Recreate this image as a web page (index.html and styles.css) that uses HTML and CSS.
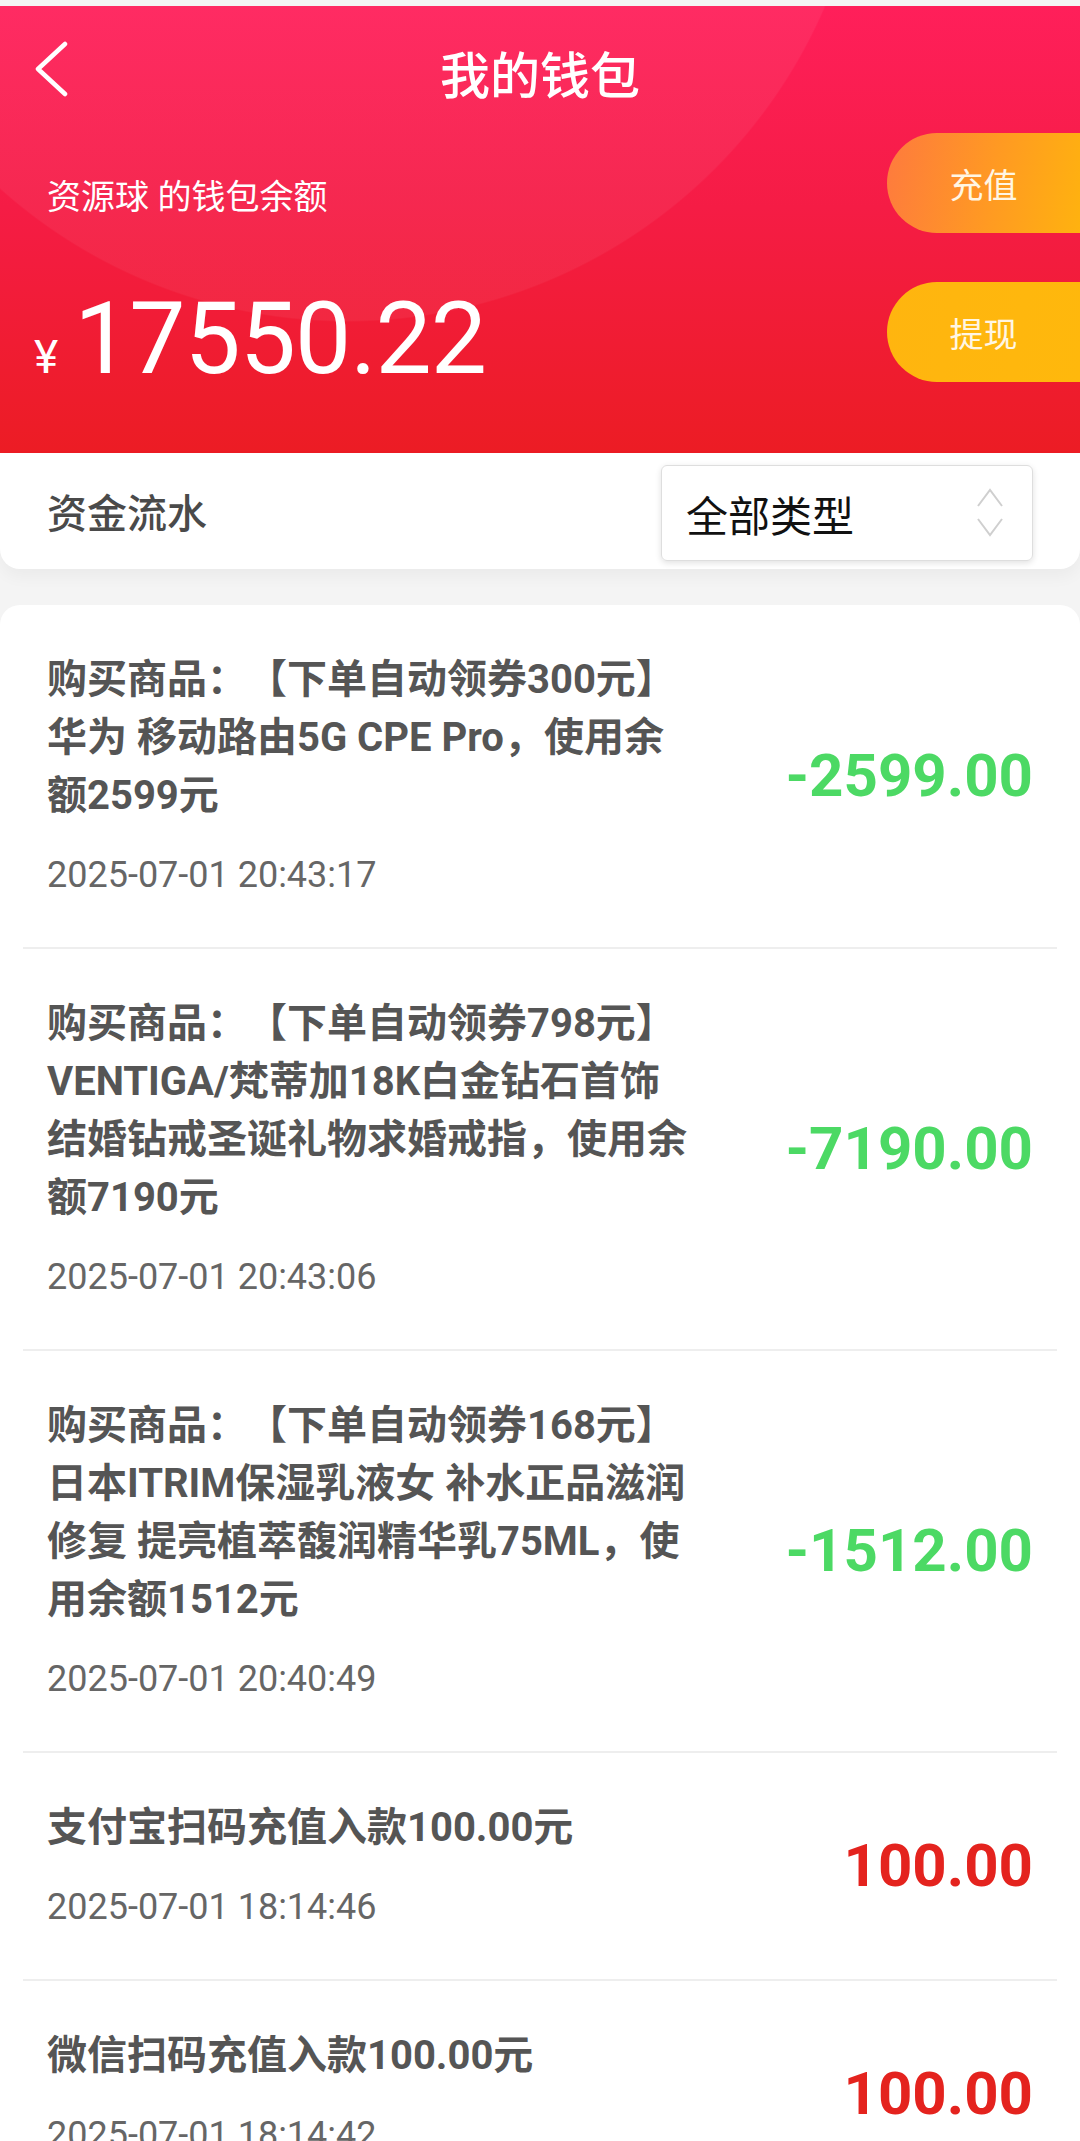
FILE: index.html
```html
<!DOCTYPE html>
<html lang="zh-CN">
<head>
  <meta charset="UTF-8">
  <meta name="viewport" content="width=device-width, initial-scale=1.0">
  <title>我的钱包</title>
  <link rel="stylesheet" href="styles.css">
</head>
<body>
  <div class="page">
    <header class="wallet-head">
      <div class="nav">
        <a class="back" href="#">
          <svg width="36" height="56" viewBox="0 0 36 56">
            <path d="M31 3 L4 28 L31 53" fill="none" stroke="#fff" stroke-width="4.5" stroke-linecap="round" stroke-linejoin="round"/>
          </svg>
        </a>
        <h1>我的钱包</h1>
        <span></span>
      </div>
      <div class="balance-row">
        <div class="balance-info">
          <p class="balance-label">资源球 的钱包余额</p>
          <div class="balance">
            <span class="yen">¥</span>
            <span class="balance-num">17550.22</span>
          </div>
        </div>
        <div class="actions">
          <button class="act act-recharge">充值</button>
          <button class="act act-withdraw">提现</button>
        </div>
      </div>
    </header>

    <section class="filter">
      <span class="filter-title">资金流水</span>
      <div class="type-select">
        <span>全部类型</span>
        <svg width="28" height="50" viewBox="0 0 28 50">
          <path d="M2 18 L14 2 L26 18" fill="none" stroke="#cfcfcf" stroke-width="2"/>
          <path d="M2 31 L14 47 L26 31" fill="none" stroke="#cfcfcf" stroke-width="2"/>
        </svg>
      </div>
    </section>

    <ul class="records">
      <li class="record">
        <div class="record-info">
          <p class="record-title">购买商品：【下单自动领券300元】华为 移动路由5G CPE Pro，使用余额2599元</p>
          <p class="record-time">2025-07-01 20:43:17</p>
        </div>
        <span class="record-amount out">-2599.00</span>
      </li>
      <li class="record">
        <div class="record-info">
          <p class="record-title">购买商品：【下单自动领券798元】VENTIGA/梵蒂加18K白金钻石首饰结婚钻戒圣诞礼物求婚戒指，使用余额7190元</p>
          <p class="record-time">2025-07-01 20:43:06</p>
        </div>
        <span class="record-amount out">-7190.00</span>
      </li>
      <li class="record">
        <div class="record-info">
          <p class="record-title">购买商品：【下单自动领券168元】日本ITRIM保湿乳液女 补水正品滋润修复 提亮植萃馥润精华乳75ML，使用余额1512元</p>
          <p class="record-time">2025-07-01 20:40:49</p>
        </div>
        <span class="record-amount out">-1512.00</span>
      </li>
      <li class="record">
        <div class="record-info">
          <p class="record-title">支付宝扫码充值入款100.00元</p>
          <p class="record-time">2025-07-01 18:14:46</p>
        </div>
        <span class="record-amount in">100.00</span>
      </li>
      <li class="record">
        <div class="record-info">
          <p class="record-title">微信扫码充值入款100.00元</p>
          <p class="record-time">2025-07-01 18:14:42</p>
        </div>
        <span class="record-amount in">100.00</span>
      </li>
    </ul>
  </div>
</body>
</html>
```

FILE: styles.css
```css
body {
  margin: 0;
  background: #f4f4f4;
  font-family: Roboto, "Noto Sans CJK SC", sans-serif;
  text-spacing-trim: space-all;
}
.page {
  height: 100vh;
  overflow: hidden;
  padding-top: 6px;
  box-sizing: border-box;
}
.wallet-head {
  height: 447px;
  box-sizing: border-box;
  padding-top: 24px;
  color: #fff;
  background:
    radial-gradient(circle 521px at 347px -205px, rgba(255, 255, 255, 0.055) 99.7%, rgba(255, 255, 255, 0) 100%),
    linear-gradient(180deg, #ff1f5a 0%, #f51c45 45%, #ec1c24 100%);
}
.nav {
  display: grid;
  grid-template-columns: 1fr auto 1fr;
  align-items: center;
  height: 94px;
}
.back {
  display: block;
  width: 36px;
  height: 56px;
  margin: 0 0 16px 34px;
}
.nav h1 {
  margin: 0;
  font-size: 50px;
  font-weight: 500;
  line-height: 50px;
}
.balance-row {
  display: flex;
  justify-content: space-between;
  align-items: flex-start;
}
.balance-info {
  padding-left: 34px;
}
.balance-label {
  margin: 49px 0 0 13px;
  font-size: 34px;
  line-height: 48px;
}
.balance {
  display: flex;
  align-items: baseline;
  margin-top: 68px;
}
.yen {
  font-size: 46px;
  margin-right: 16px;
}
.balance-num {
  font-size: 100px;
  line-height: 100px;
  letter-spacing: -1px;
}
.actions {
  display: flex;
  flex-direction: column;
  gap: 49px;
  margin-top: 9px;
}
.act {
  width: 193px;
  height: 100px;
  padding: 0;
  border: none;
  border-radius: 50px 0 0 50px;
  font-family: inherit;
  font-size: 34px;
  color: #fff6e4;
}
.act-recharge {
  background: linear-gradient(100deg, #fe7a3e 0%, #ff9a22 55%, #ffb20f 100%);
}
.act-withdraw {
  background: linear-gradient(100deg, #ffb50f 0%, #ffb80c 100%);
}
.filter {
  position: relative;
  height: 116px;
  box-sizing: border-box;
  padding: 0 47px;
  display: flex;
  align-items: center;
  justify-content: space-between;
  background: #fff;
  border-radius: 0 0 20px 20px;
  box-shadow: 0 8px 16px rgba(0, 0, 0, 0.04);
}
.filter-title {
  font-size: 40px;
  font-weight: 500;
  color: #4a4a4a;
}
.type-select {
  width: 372px;
  height: 96px;
  margin-top: 4px;
  box-sizing: border-box;
  padding: 0 28px 0 24px;
  display: flex;
  align-items: center;
  justify-content: space-between;
  font-size: 42px;
  color: #111;
  border: 1px solid #dedede;
  border-radius: 6px;
  box-shadow: 0 2px 6px rgba(0, 0, 0, 0.12);
}
.records {
  list-style: none;
  margin: 36px 0 0;
  padding: 0 23px;
  background: #fff;
  border-radius: 20px 20px 0 0;
}
.record {
  display: flex;
  align-items: center;
  justify-content: space-between;
  padding: 46px 24px 47px;
  border-bottom: 2px solid #eee;
}
.record-info {
  width: 645px;
}
.record-title {
  margin: 0;
  font-size: 40px;
  line-height: 58px;
  font-weight: bold;
  color: #555;
}
.record-time {
  margin: 25px 0 0;
  font-size: 36px;
  line-height: 50px;
  color: #666;
}
.record-amount {
  font-size: 60px;
  font-weight: bold;
}
.out {
  color: #4cd964;
}
.in {
  color: #e4231e;
}
```
